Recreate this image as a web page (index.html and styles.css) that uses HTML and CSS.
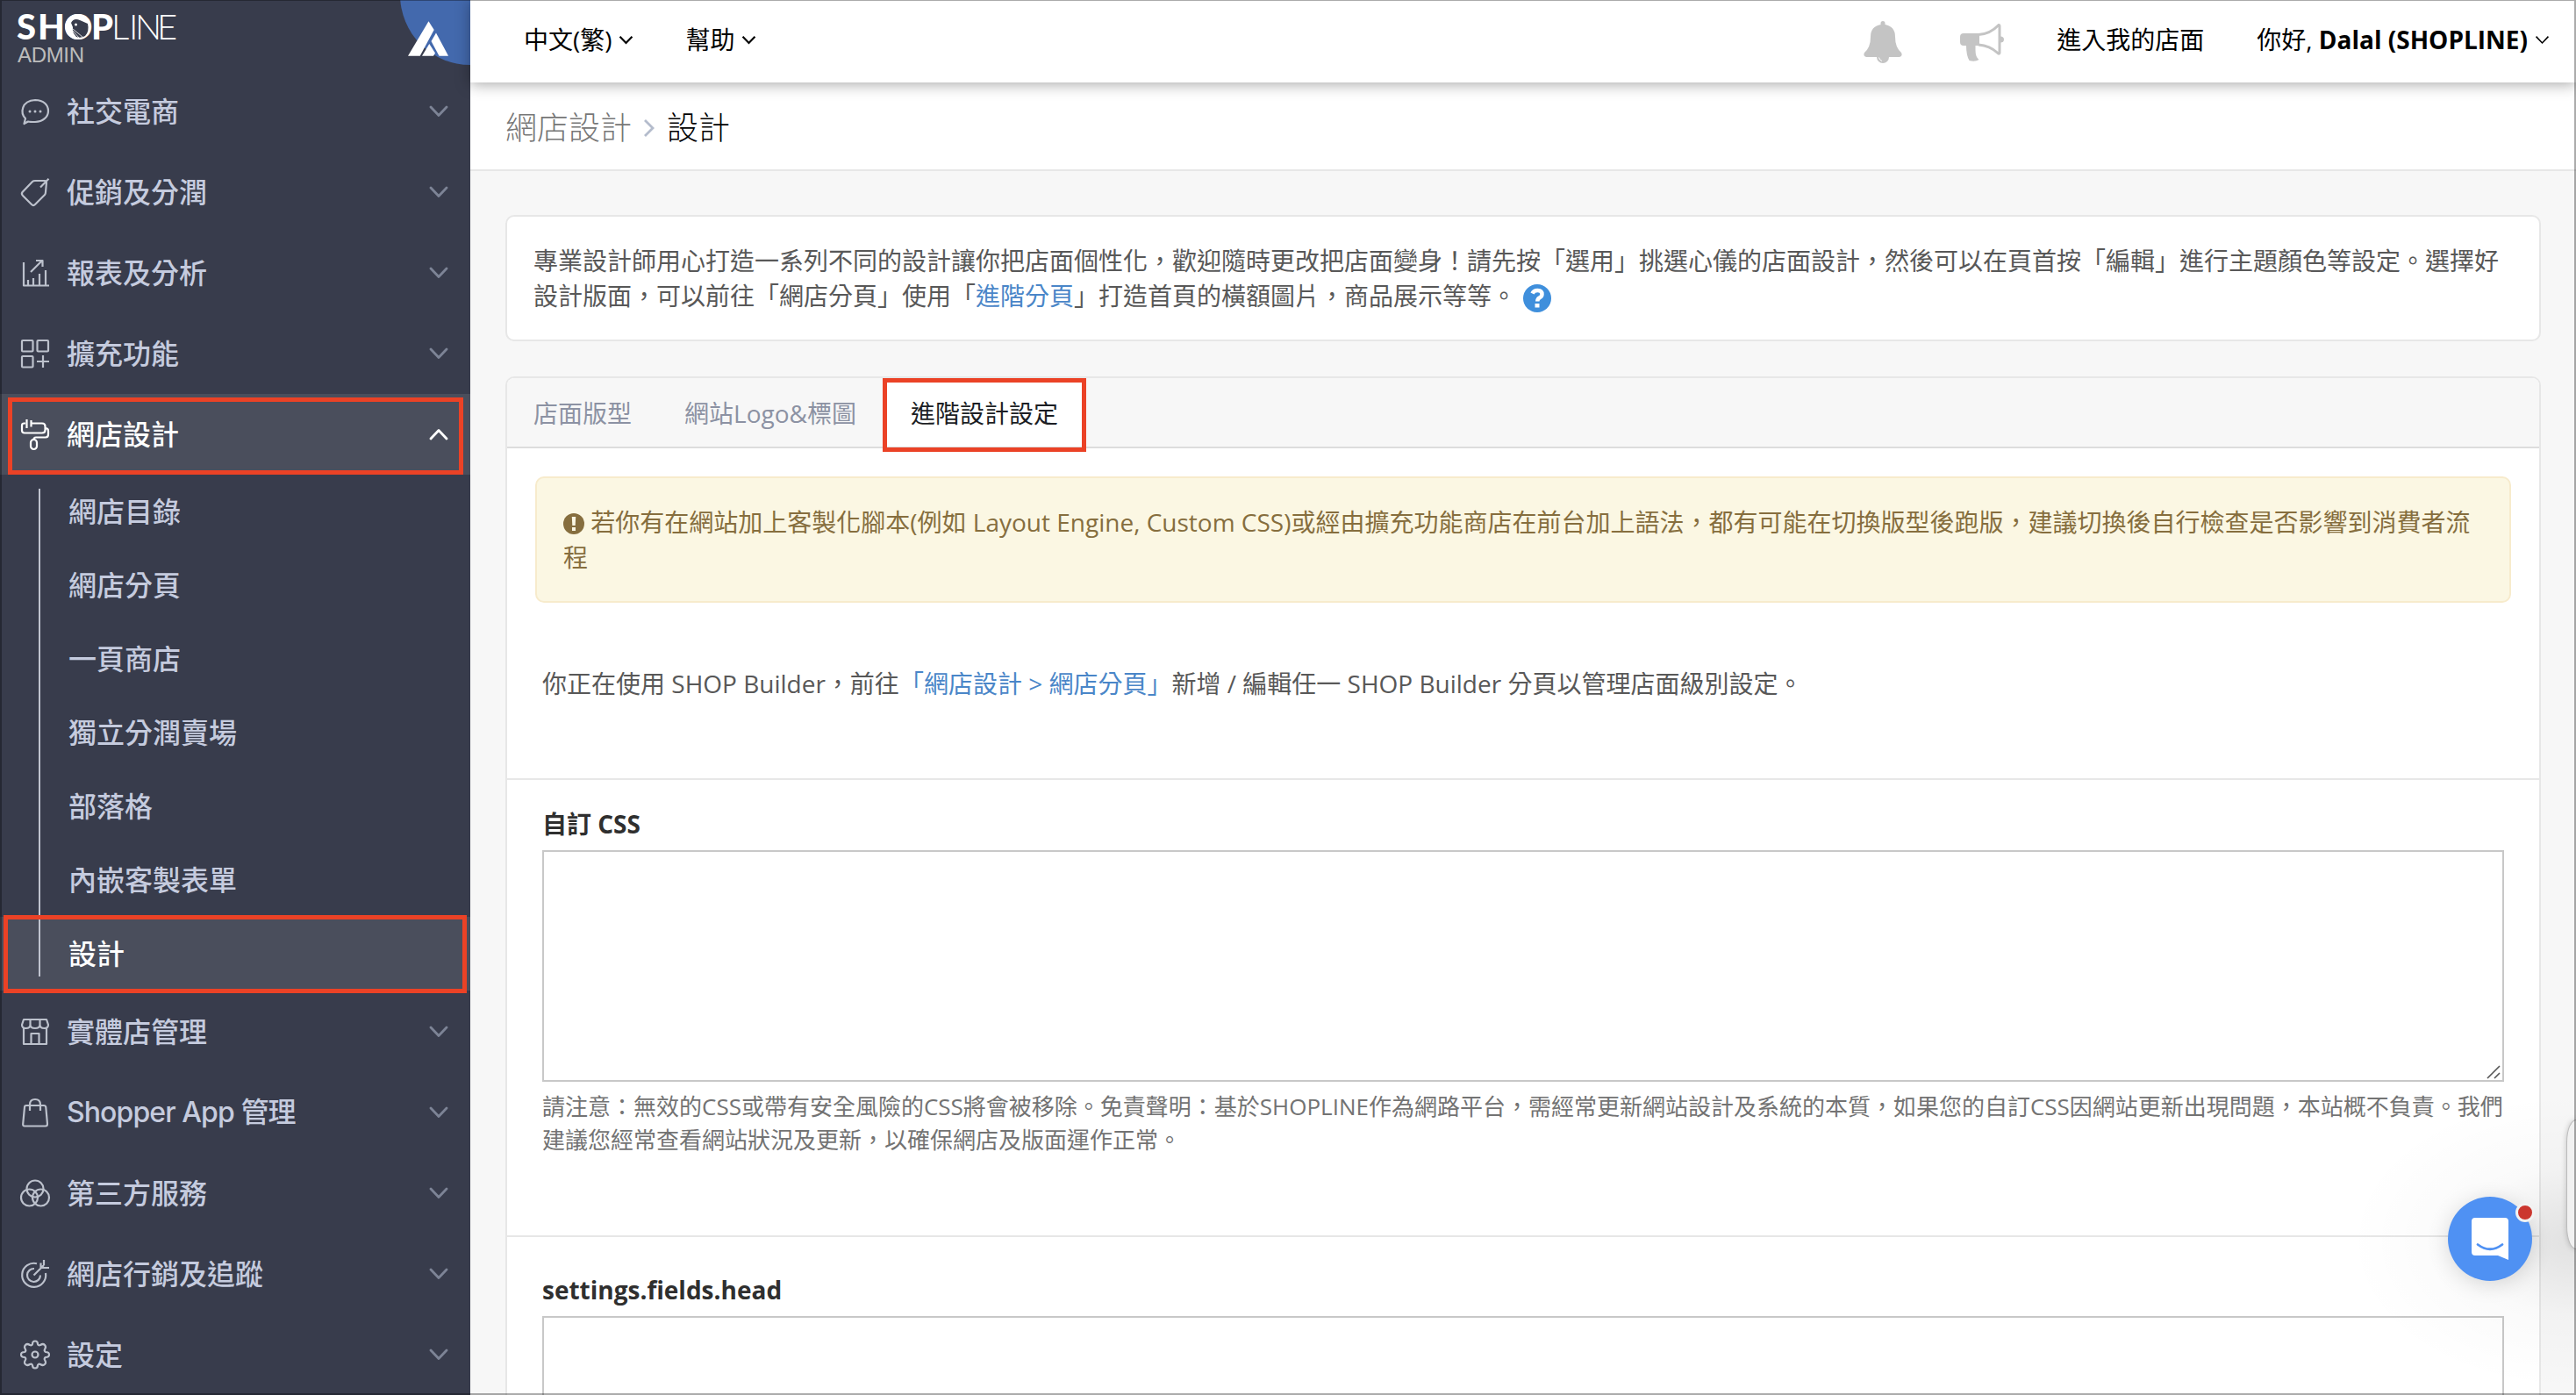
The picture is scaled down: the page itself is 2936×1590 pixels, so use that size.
FILE: index.html
```html
<!DOCTYPE html>
<html lang="zh-Hant">
<head>
    <meta charset="UTF-8">
    <meta name="viewport" content="width=device-width, initial-scale=1.0">
    <title>SHOPLINE Admin - 設計</title>
    <link rel="stylesheet" href="styles.css">
</head>
<body>
    <svg class="defs" width="0" height="0">
        <symbol id="chevron" viewBox="0 0 22 14"><path d="M2 2 L11 11.5 L20 2"/></symbol>
    </svg>

    <aside class="sidebar">
        <div class="brand">
            <svg width="536" height="81" viewBox="0 0 536 81">
                <circle cx="536" cy="-6" r="80" fill="#4369ad"/>
                <text class="brand-bold" y="45" x="19 43 73 104">SHOP</text>
                <text class="brand-light" y="45" x="127 147 154 179">LINE</text>
                <circle cx="88.5" cy="30.5" r="14.5" fill="#fff"/>
                <path d="M81 26 Q84 20 91 23 L100 27 Q102 36 97 41 Q92 44 87 42 Q82 37 83 31 Z" fill="#383c4c"/>
                <circle cx="86.5" cy="28" r="1.5" fill="#fff"/>
                <path d="M83 33 L94 42 M83 35 L90 43" stroke="#fff" stroke-width="0.8"/>
                <text class="brand-admin" x="20" y="71" textLength="76">ADMIN</text>
                <g fill="#fff">
                    <polygon points="465,63.7 488.5,24.3 494.7,34 478.7,63.7"/>
                    <polygon points="497,37.5 511,63.7 500.5,63.7 491.5,47"/>
                    <polygon points="489.3,50 496,60.5 494,63.7 481,63.7"/>
                </g>
            </svg>
        </div>

        <nav class="menu">
            <a class="menu-item">
                <svg class="icon" viewBox="0 0 32 32"><path d="M5 24 C-1 18 0 4 16 3 C26 3 31 9 31 15.5 C31 22 25 28 16 28 C12 28 10 28 8 27.5 L3.5 30 Z"/><path class="dots" d="M10 16h.01M16 16h.01M22 16h.01"/></svg>
                <span>社交電商</span>
                <svg class="chevron"><use href="#chevron"/></svg>
            </a>
            <a class="menu-item">
                <svg class="icon" viewBox="0 0 32 32"><path d="M1.5 16 L13 4 Q14 3 16 3 H27 Q29 3 29 5 L28 16 Q28 18 27 19 L16 30 Q14 32 12 30 L2 20 Q0 18 1.5 16 Z M22 10.5 L31.5 .8"/></svg>
                <span>促銷及分潤</span>
                <svg class="chevron"><use href="#chevron"/></svg>
            </a>
            <a class="menu-item">
                <svg class="icon" viewBox="0 0 32 32"><path d="M3 4 V30.5 H32 M8 30 V24 M14 30 V22 M21 30 V17 M28 30 V13 M11 15 L24 2 M17 2 H24.5 V9"/></svg>
                <span>報表及分析</span>
                <svg class="chevron"><use href="#chevron"/></svg>
            </a>
            <a class="menu-item">
                <svg class="icon" viewBox="0 0 32 32"><rect x="1" y="1" width="12.5" height="12.5" rx="1"/><rect x="18.5" y="1" width="12.5" height="12.5" rx="1"/><rect x="1" y="19" width="12.5" height="12.5" rx="1"/><path d="M25 18 V32 M18 25 H32"/></svg>
                <span>擴充功能</span>
                <svg class="chevron"><use href="#chevron"/></svg>
            </a>
            <a class="menu-item active">
                <svg class="icon" viewBox="0 0 32 32"><path d="M5 3.5 H3.500 Q1 3.500 1 6 V11.500 Q1 14.500 4 14.500 H24 Q27.500 14.500 27.500 11 V7 Q27.500 3.500 24 3.500 H11 M6.500 -1 V9 M11.500 0 V7.500 M27.500 9 Q31 9 31 12 V16 Q31 19.500 28 19.500 H17 Q14.500 19.500 14.500 22"/><rect x="11" y="22" width="7" height="11" rx="3.5"/></svg>
                <span>網店設計</span>
                <svg class="chevron up"><use href="#chevron"/></svg>
                <i class="highlight"></i>
            </a>
            <div class="submenu">
                <a class="submenu-item">網店目錄</a>
                <a class="submenu-item">網店分頁</a>
                <a class="submenu-item">一頁商店</a>
                <a class="submenu-item">獨立分潤賣場</a>
                <a class="submenu-item">部落格</a>
                <a class="submenu-item">內嵌客製表單</a>
                <a class="submenu-item active">設計<i class="highlight"></i></a>
            </div>
            <a class="menu-item">
                <svg class="icon" viewBox="0 0 32 32"><path d="M3 2 H29 L31 8 Q31 12 26.5 12 Q21.500 12 21.500 8 Q21.500 12 16 12 Q10.500 12 10.500 8 Q10.500 12 5.500 12 Q1 12 1 8 Z M10.500 2 V8 M21.500 2 V8 M3 12 V30 H29 V12 M11.500 30 V18 H20.500 V30"/></svg>
                <span>實體店管理</span>
                <svg class="chevron"><use href="#chevron"/></svg>
            </a>
            <a class="menu-item">
                <svg class="icon" viewBox="0 0 32 32"><path d="M6 8 H26 Q28 8 28.3 10 L30 29 Q30 31.5 28 31.5 H4 Q2 31.5 2.2 29 L4 10 Q4 8 6 8 Z M10 14 V7 Q10 1 16 1 Q22 1 22 7 V14"/></svg>
                <span class="latin">Shopper App 管理</span>
                <svg class="chevron"><use href="#chevron"/></svg>
            </a>
            <a class="menu-item">
                <svg class="icon" viewBox="0 0 32 32"><circle cx="16" cy="11" r="9.5"/><circle cx="9.5" cy="21" r="9.5"/><circle cx="22.5" cy="21" r="9.5"/></svg>
                <span>第三方服務</span>
                <svg class="chevron"><use href="#chevron"/></svg>
            </a>
            <a class="menu-item">
                <svg class="icon" viewBox="0 0 32 32"><path d="M18 4.2 A13.5 13.5 0 1 0 28 15 M15 10 A7.5 7.5 0 1 0 22 17.5 M14.5 17.5 L26 6 M22.500 3.500 V9 H32 M26 6 V0 M26 6 L22.500 9"/></svg>
                <span>網店行銷及追蹤</span>
                <svg class="chevron"><use href="#chevron"/></svg>
            </a>
            <a class="menu-item">
                <svg class="icon" viewBox="0 0 32 32"><path d="M13 4 Q13 .5 16 .5 Q19 .5 19 4 Q20 6 22 5 Q25 3 27 5 Q29 7 27 10 Q26 12 28 13 Q32 13 32 16 Q32 19 28 19 Q26 20 27 22 Q29 25 27 27 Q25 29 22 27 Q20 26 19 28 Q19 31.5 16 31.5 Q13 31.5 13 28 Q12 26 10 27 Q7 29 5 27 Q3 25 5 22 Q6 20 4 19 Q0 19 0 16 Q0 13 4 13 Q6 12 5 10 Q3 7 5 5 Q7 3 10 5 Q12 6 13 4 Z"/><circle cx="16" cy="16" r="3.5"/></svg>
                <span>設定</span>
                <svg class="chevron"><use href="#chevron"/></svg>
            </a>
        </nav>
    </aside>

    <div class="main">
        <header class="topbar">
            <a class="top-link lang">中文(繁)<svg class="caret"><use href="#chevron"/></svg></a>
            <a class="top-link">幫助<svg class="caret"><use href="#chevron"/></svg></a>
            <div class="top-right">
                <svg class="bell" width="44" height="48" viewBox="0 0 44 48">
                    <path d="M15 41 A7 7 0 0 0 29 41 Z"/>
                    <path d="M19.5 5 V2.5 Q19.5 0 22 0 Q24.5 0 24.5 2.5 V4 Q36 6 36 18 Q36 30 43 36 Q45 40 41 41 H3 Q-1 40 1 36 Q8 30 8 18 Q8 6 19.5 4 Z"/>
                    <path d="M17.5 41.5 Q18 44.5 21 45.5" fill="none" stroke="#fff"/>
                </svg>
                <svg class="horn" width="50" height="44" viewBox="0 0 50 44">
                    <path d="M0 15 Q0 11 4 11 H22 V25 H17.5 V30 Q17.5 38 21.5 41 Q17 44 10.5 42 Q7 36 7 25 H4 Q0 25 0 21 Z"/>
                    <path d="M21 12.5 Q34 12 44 1.5 Q45 1.5 45 3 V33 Q45 35 43 33.5 Q34 25 21 24" fill="none" stroke="#c4c4c4" stroke-width="3"/>
                    <path d="M46 14.5 Q50 14.5 50 18 Q50 21.5 46 21.5 Z"/>
                </svg>
                <a class="top-link store">進入我的店面</a>
                <a class="top-link">你好, <b>Dalal (SHOPLINE)</b><svg class="caret thin"><use href="#chevron"/></svg></a>
            </div>
        </header>

        <div class="breadcrumb">
            <span>網店設計</span>
            <svg width="14" height="22" viewBox="0 0 14 22"><path d="M2 2 L11 11 L2 20"/></svg>
            <span class="current">設計</span>
        </div>

        <div class="content">
            <section class="card intro">
                專業設計師用心打造一系列不同的設計讓你把店面個性化，歡迎隨時更改把店面變身！請先按「選用」挑選心儀的店面設計，然後可以在頁首按「編輯」進行主題顏色等設定。選擇好設計版面，可以前往「網店分頁」使用「<a>進階分頁</a>」打造首頁的橫額圖片，商品展示等等。<svg class="help" width="32" height="32" viewBox="0 0 32 32"><circle cx="16" cy="16" r="16" fill="#3f8fdc"/><path d="M10.5 10.5 Q12 7 16.5 7 Q21.5 7 21.5 11.5 Q21.5 14 18.5 15.5 Q16.3 16.8 16.3 19.5" fill="none" stroke="#fff" stroke-width="4.5"/><rect x="13.5" y="22" width="5" height="4.5" fill="#fff"/></svg>
            </section>

            <section class="card panel">
                <div class="tabs">
                    <a class="tab">店面版型</a>
                    <a class="tab">網站Logo&amp;標圖</a>
                    <a class="tab active">進階設計設定<i class="highlight"></i></a>
                </div>
                <div class="group first">
                    <div class="alert">
                        <svg class="warn" width="24" height="24" viewBox="0 0 24 24"><circle cx="12" cy="12" r="12" fill="#866e3e"/><path d="M9.8 4 H14.2 L13.7 14 H10.3 Z M10 16 H14 V20 H10 Z" fill="#fbf7e3"/></svg>
                        若你有在網站加上客製化腳本(例如 Layout Engine, Custom CSS)或經由擴充功能商店在前台加上語法，都有可能在切換版型後跑版，建議切換後自行檢查是否影響到消費者流程
                    </div>
                    <p class="notice">你正在使用 SHOP Builder，前往<a>「網店設計 &gt; 網店分頁」</a>新增 / 編輯任一 SHOP Builder 分頁以管理店面級別設定。</p>
                </div>
                <div class="group css">
                    <label class="label" for="css">自訂 CSS</label>
                    <div class="field">
                        <textarea id="css" class="code"></textarea>
                        <svg class="grip" width="16" height="16" viewBox="0 0 16 16"><path d="M1 15 L15 1 M9 15 L15 9"/></svg>
                    </div>
                    <p class="hint">請注意：無效的CSS或帶有安全風險的CSS將會被移除。免責聲明：基於SHOPLINE作為網路平台，需經常更新網站設計及系統的本質，如果您的自訂CSS因網站更新出現問題，本站概不負責。我們建議您經常查看網站狀況及更新，以確保網店及版面運作正常。</p>
                </div>
                <div class="group head">
                    <label class="label" for="head">settings.fields.head</label>
                    <textarea id="head" class="code"></textarea>
                </div>
            </section>
        </div>
    </div>

    <div class="corner-shade"></div>
    <div class="side-handle"></div>
    <div class="chat">
        <svg width="96" height="96" viewBox="0 0 96 96">
            <path d="M31 24 H65 Q69 24 69 28 V72 L57 67 H31 Q27 67 27 63 V28 Q27 24 31 24 Z" fill="#fff"/>
            <path d="M34 54.5 Q48 65 62 54.5" fill="none" stroke="#4f91f3" stroke-width="2.8" stroke-linecap="round"/>
        </svg>
        <i class="unread"></i>
    </div>
    <div class="window-frame"></div>
</body>
</html>
```
FILE: styles.css
```css
* {
    box-sizing: border-box;
}
body {
    position: relative;
    margin: 0;
    height: 1590px;
    display: flex;
    overflow: hidden;
    background: #f7f7f7;
    color: #585858;
    font-family: "Open Sans", "Noto Sans CJK TC", sans-serif;
    font-size: 28px;
    line-height: 40px;
}
a {
    color: #4a86c8;
    text-decoration: none;
}
.defs {
    position: absolute;
}
.highlight {
    position: absolute;
    border: 5px solid #eb4226;
    z-index: 3;
}

/* sidebar */
.sidebar {
    width: 536px;
    flex: none;
    overflow: hidden;
    background: #383c4c;
    font-family: "Inter", "Noto Sans CJK TC", sans-serif;
    font-size: 32px;
}
.brand {
    height: 81px;
}
.brand svg {
    display: block;
}
.brand text {
    fill: #fff;
    font-family: Lato, sans-serif;
    font-size: 40px;
}
.brand .brand-bold { font-weight: 900; }
.brand .brand-light { font-weight: 300; }
.brand .brand-admin {
    fill: #bcbcbc;
    font-family: "Liberation Sans", Arial, sans-serif;
    font-size: 24px;
}
.menu-item {
    position: relative;
    display: flex;
    align-items: center;
    height: 92px;
    padding: 0 25px 0 24px;
    color: #c5cbde;
    font-weight: 500;
}
.menu-item span {
    flex: 1;
    margin-left: 20px;
    padding-top: 2px;
}
.menu-item .latin {
    padding-top: 0;
    letter-spacing: -0.9px;
}
.icon {
    width: 32px;
    height: 32px;
    overflow: visible;
    fill: none;
    stroke: #bcc1cc;
    stroke-width: 2.2;
    stroke-linejoin: round;
}
.dots {
    stroke-width: 3;
    stroke-linecap: round;
}
.chevron {
    width: 22px;
    height: 14px;
    fill: none;
    stroke: #7d8496;
    stroke-width: 2.8;
    stroke-linecap: round;
    stroke-linejoin: round;
}
.chevron.up {
    transform: rotate(180deg);
}
.menu-item.active,
.submenu-item.active {
    background: #4a4e5c;
    color: #fff;
}
.menu-item.active .icon,
.menu-item.active .chevron {
    stroke: #fff;
}
.menu-item .highlight {
    inset: 4px 8px 0 9px;
}
.submenu {
    position: relative;
    padding-bottom: 1px;
}
.submenu::before {
    content: "";
    position: absolute;
    left: 44px;
    top: 16px;
    bottom: 17px;
    width: 2px;
    background: #bfc3cf;
    z-index: 1;
}
.submenu-item {
    position: relative;
    display: flex;
    align-items: center;
    height: 84px;
    padding: 2px 0 0 78px;
    color: #c5cbde;
    font-weight: 500;
}
.submenu-item .highlight {
    inset: -2px 4px -3px 4px;
}

/* top bar */
.main {
    display: flex;
    flex: 1;
    flex-direction: column;
    min-width: 0;
}
.topbar {
    position: relative;
    z-index: 2;
    height: 94px;
    flex: none;
    display: flex;
    align-items: center;
    padding: 0 30px 4px 61px;
    background: #fff;
    box-shadow: 0 2px 16px rgba(0, 0, 0, 0.35);
}
.top-link {
    display: flex;
    align-items: center;
    color: #000;
    white-space: pre;
}
.lang {
    margin-right: 60px;
}
.caret {
    width: 17px;
    height: 11px;
    margin-left: 7px;
    fill: none;
    stroke: #000;
    stroke-width: 2.8;
}
.caret.thin {
    margin-left: 8px;
    stroke-width: 2;
}
.top-right {
    display: flex;
    align-items: center;
    margin-left: auto;
    fill: #c4c4c4;
}
.bell {
    margin: 5px 66px 0 0;
}
.horn {
    margin: 7px 60px 0 0;
}
.store {
    margin-right: 60px;
}

.breadcrumb {
    height: 101px;
    flex: none;
    display: flex;
    align-items: center;
    padding: 5px 40px 0;
    background: #fff;
    border-bottom: 2px solid #e7e7e7;
    font-size: 36px;
    font-weight: 300;
    color: #777;
}
.breadcrumb svg {
    margin: 0 13px;
    fill: none;
    stroke: #b4bccc;
    stroke-width: 2.8;
}
.breadcrumb .current {
    color: #000;
}

/* content */
.content {
    display: flex;
    flex: 1;
    flex-direction: column;
    min-height: 0;
    padding: 50px 40px 0;
}
.card {
    background: #fff;
    border: 2px solid #e7e7e7;
    border-radius: 10px;
}
.intro {
    height: 144px;
    flex: none;
    padding: 30px;
}
.help {
    margin-left: 8px;
    vertical-align: -8px;
}
.panel {
    display: flex;
    flex: 1;
    flex-direction: column;
    min-height: 0;
    margin-top: 40px;
    border-bottom: 0;
    border-radius: 10px 10px 0 0;
}
.tabs {
    display: flex;
    height: 80px;
    flex: none;
    background: #f7f7f7;
    border-bottom: 2px solid #ddd;
    border-radius: 8px 8px 0 0;
}
.tab {
    position: relative;
    display: flex;
    align-items: center;
    padding: 2px 30px 0;
    color: #8c92a3;
}
.tab.active {
    padding: 2px 32px 0;
    background: #fff;
    color: #1c1e24;
}
.tab .highlight {
    inset: 0 0 -6px 0;
}
.group {
    flex: none;
    padding: 0 40px;
    border-bottom: 2px solid #e7e7e7;
}
.group.first {
    height: 378px;
    padding-top: 32px;
}
.alert {
    height: 144px;
    margin: 0 -8px;
    padding: 30px;
    background: #fbf7e3;
    border: 2px solid #f7ebcc;
    border-radius: 10px;
    color: #866e3e;
}
.warn {
    vertical-align: -3px;
}
.notice {
    margin: 72px 0 0;
}
.group.css {
    height: 521px;
    padding-top: 30px;
}
.group.head {
    display: flex;
    flex: 1;
    flex-direction: column;
    min-height: 0;
    padding-top: 40px;
    border: 0;
}
.label {
    display: block;
    height: 50px;
    flex: none;
    color: #2f2f2f;
    font-weight: 700;
}
.field {
    position: relative;
}
.code {
    display: block;
    width: 100%;
    height: 264px;
    border: 2px solid #c8c8c8;
    background: #fff;
    resize: none;
}
/* second box is cut by the window edge */
.head .code {
    height: auto;
    flex: 1;
    border-bottom: 0;
}
.grip {
    position: absolute;
    right: 4px;
    bottom: 3px;
    fill: none;
    stroke: #555;
    stroke-width: 1.6;
}
.hint {
    margin: 9px 0 0;
    color: #737373;
    font-size: 26px;
    line-height: 38px;
}

/* floating chat launcher */
.corner-shade {
    position: absolute;
    right: 0;
    top: 1240px;
    width: 300px;
    height: 350px;
    background: radial-gradient(ellipse 260px 170px at 100% 50%, rgba(0, 0, 0, 0.09), rgba(0, 0, 0, 0.02) 50%, transparent);
}
.side-handle {
    position: absolute;
    right: 0;
    top: 1276px;
    width: 11px;
    height: 148px;
    border: 1px solid #bbb;
    border-right: 0;
    border-radius: 11px 0 0 11px / 26px 0 0 26px;
    background: #f1f1f1;
    box-shadow: 0 0 6px rgba(0, 0, 0, 0.2);
}
.chat {
    position: absolute;
    right: 50px;
    top: 1364px;
    width: 96px;
    height: 96px;
    border-radius: 50%;
    background: #4f91f3;
    box-shadow: 0 4px 24px rgba(0, 0, 0, 0.14);
}
.unread {
    position: absolute;
    right: -3px;
    top: 7px;
    width: 22px;
    height: 22px;
    border: 3px solid #f2f2f2;
    border-radius: 50%;
    background: #cb362e;
}
.window-frame {
    position: absolute;
    inset: 0;
    z-index: 5;
    border: solid rgba(0, 0, 0, 0.33);
    border-width: 1px 2px 2px;
    pointer-events: none;
}
```
